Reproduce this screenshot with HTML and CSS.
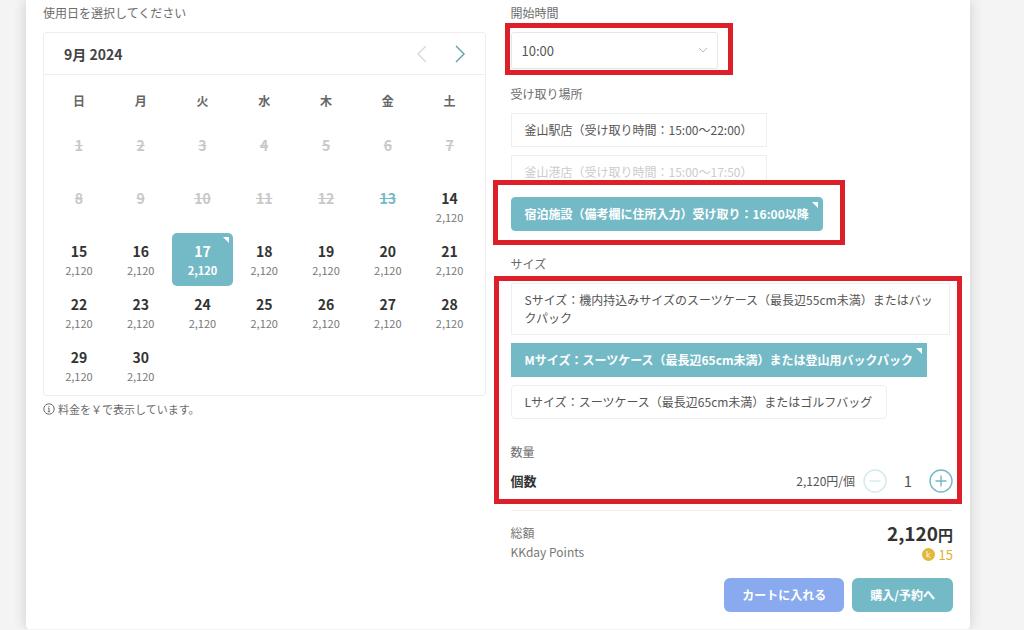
FILE: index.html
```
<!DOCTYPE html>
<html lang="ja">
<head>
<meta charset="utf-8">
<meta name="viewport" content="width=device-width, initial-scale=1">
<title>KKday</title>
<link rel="stylesheet" href="styles.css">
</head>
<body>
<main class="card">
  <section class="column">
    <h2 class="label">使用日を選択してください</h2>
    <div class="calendar">
      <header class="calendar-head">
        <h3 class="month">9月 2024</h3>
        <button class="nav nav-off" type="button" disabled aria-label="前の月"><svg width="10" height="18" viewBox="0 0 10 18"><path d="M9 1L1 9l8 8"/></svg></button>
        <button class="nav" type="button" aria-label="次の月"><svg width="10" height="18" viewBox="0 0 10 18"><path d="M1 1l8 8-8 8"/></svg></button>
      </header>
      <table class="days">
        <thead>
          <tr><th>日</th><th>月</th><th>火</th><th>水</th><th>木</th><th>金</th><th>土</th></tr>
        </thead>
        <tbody>
          <tr>
            <td><button class="day" disabled><s>1</s></button></td>
            <td><button class="day" disabled><s>2</s></button></td>
            <td><button class="day" disabled><s>3</s></button></td>
            <td><button class="day" disabled><s>4</s></button></td>
            <td><button class="day" disabled><s>5</s></button></td>
            <td><button class="day" disabled><s>6</s></button></td>
            <td><button class="day" disabled><s>7</s></button></td>
          </tr>
          <tr>
            <td><button class="day" disabled><s>8</s></button></td>
            <td><button class="day" disabled><s>9</s></button></td>
            <td><button class="day" disabled><s>10</s></button></td>
            <td><button class="day" disabled><s>11</s></button></td>
            <td><button class="day" disabled><s>12</s></button></td>
            <td><button class="day today" disabled><s>13</s></button></td>
            <td><button class="day">14<span class="price">2,120</span></button></td>
          </tr>
          <tr>
            <td><button class="day">15<span class="price">2,120</span></button></td>
            <td><button class="day">16<span class="price">2,120</span></button></td>
            <td><button class="day picked" aria-pressed="true">17<span class="price">2,120</span></button></td>
            <td><button class="day">18<span class="price">2,120</span></button></td>
            <td><button class="day">19<span class="price">2,120</span></button></td>
            <td><button class="day">20<span class="price">2,120</span></button></td>
            <td><button class="day">21<span class="price">2,120</span></button></td>
          </tr>
          <tr>
            <td><button class="day">22<span class="price">2,120</span></button></td>
            <td><button class="day">23<span class="price">2,120</span></button></td>
            <td><button class="day">24<span class="price">2,120</span></button></td>
            <td><button class="day">25<span class="price">2,120</span></button></td>
            <td><button class="day">26<span class="price">2,120</span></button></td>
            <td><button class="day">27<span class="price">2,120</span></button></td>
            <td><button class="day">28<span class="price">2,120</span></button></td>
          </tr>
          <tr>
            <td><button class="day">29<span class="price">2,120</span></button></td>
            <td><button class="day">30<span class="price">2,120</span></button></td>
            <td></td><td></td><td></td><td></td><td></td>
          </tr>
        </tbody>
      </table>
    </div>
    <p class="note"><svg width="12" height="12" viewBox="0 0 12 12"><circle cx="6" cy="6" r="5.2"/><path d="M6 3v1.2M5 5.2h1v3.4M4.8 8.7h2.4"/></svg>料金を￥で表示しています。</p>
  </section>

  <section class="column">
    <label class="label" for="start">開始時間</label>
    <div class="select-wrap marked mark-time">
      <select class="select" id="start"><option>10:00</option></select>
      <svg class="chevron" width="10" height="7" viewBox="0 0 10 7"><path d="M1 1l4 4 4-4"/></svg>
    </div>

    <h2 class="label">受け取り場所</h2>
    <div class="options">
      <button class="option" type="button">釜山駅店（受け取り時間：15:00〜22:00）</button>
      <button class="option" type="button" disabled>釜山港店（受け取り時間：15:00〜17:50）</button>
      <div class="marked mark-place">
        <button class="option picked rounded" type="button" aria-pressed="true">宿泊施設（備考欄に住所入力）受け取り：16:00以降</button>
      </div>
    </div>

    <h2 class="label">サイズ</h2>
    <div class="marked mark-size">
      <div class="options">
        <button class="option" type="button">Sサイズ：機内持込みサイズのスーツケース（最長辺55cm未満）またはバックパック</button>
        <button class="option picked" type="button" aria-pressed="true">Mサイズ：スーツケース（最長辺65cm未満）または登山用バックパック</button>
        <button class="option rounded" type="button">Lサイズ：スーツケース（最長辺65cm未満）またはゴルフバッグ</button>
      </div>
      <h2 class="label tight">数量</h2>
      <div class="quantity">
        <strong class="quantity-name">個数</strong>
        <span class="unit">2,120円/個</span>
        <button class="step" type="button" disabled aria-label="減らす"><svg width="24" height="24" viewBox="0 0 24 24"><circle cx="12" cy="12" r="11"/><path d="M6.5 12h11"/></svg></button>
        <output class="count">1</output>
        <button class="step" type="button" aria-label="増やす"><svg width="24" height="24" viewBox="0 0 24 24"><circle cx="12" cy="12" r="11"/><path d="M6.5 12h11M12 6.5v11"/></svg></button>
      </div>
    </div>

    <dl class="totals">
      <dt>総額</dt>
      <dd class="total">2,120<span class="yen">円</span></dd>
      <dt>KKday Points</dt>
      <dd class="points"><svg width="13" height="13" viewBox="0 0 13 13"><circle class="coin" cx="6.5" cy="6.5" r="6.5"/><path d="M5 3v6.5M8.4 5.2L5.2 7.5l3.3 2.2"/></svg>15</dd>
    </dl>
    <div class="actions">
      <button class="action cart" type="button">カートに入れる</button>
      <button class="action buy" type="button">購入/予約へ</button>
    </div>
  </section>
</main>
</body>
</html>
```
FILE: styles.css
```
* {
  box-sizing: border-box;
}

body {
  margin: 0;
  background: #f4f4f4;
  color: #555;
  font: 12px/18px "Noto Sans CJK JP", sans-serif;
}

button,
select {
  font: inherit;
  color: inherit;
  border: 0;
  background: none;
  padding: 0;
}

svg {
  display: block;
  flex: none;
  fill: none;
  stroke: currentColor;
}

.card {
  display: grid;
  grid-template-columns: minmax(0, 1fr) minmax(0, 1fr);
  column-gap: 25px;
  margin: 0 54px 0 26px;
  padding: 4px 17px 17px;
  background: #fff;
  border-radius: 0 0 4px 4px;
  box-shadow: 0 0 14px rgba(0, 0, 0, 0.16);
}

.label {
  display: block;
  margin: 0 0 10px;
  font-size: 12px;
  font-weight: 400;
  color: #6c6c6c;
}

.tight {
  margin-bottom: 8px;
}

/* Calendar */

.calendar {
  border: 1px solid #eee;
  border-radius: 3px;
}

.calendar-head {
  display: flex;
  align-items: center;
  gap: 28px;
  height: 42px;
  padding: 0 20px;
  border-bottom: 1px solid #eee;
}

.month {
  flex: 1;
  margin: 0;
  font-size: 14px;
  font-weight: 700;
  color: #444;
}

.nav {
  color: #5f9eab;
}

.nav svg {
  stroke-width: 1.4;
}

.nav-off {
  color: #d8d8d8;
}

.days {
  width: 100%;
  padding: 0 4px 3px;
  border-spacing: 0;
  table-layout: fixed;
}

.days th {
  height: 52px;
  padding: 0;
  font-weight: 700;
  color: #666;
}

.days td {
  height: 53px;
  padding: 0;
}

.day {
  display: flex;
  flex-direction: column;
  align-items: center;
  gap: 1px;
  width: 100%;
  height: 53px;
  padding-top: 9px;
  border-radius: 5px;
  font-size: 14px;
  font-weight: 700;
  color: #333;
}

.day:disabled {
  color: #c8c8c8;
}

.day.today {
  color: #74bac6;
}

.day.picked {
  color: #fff;
}

.price {
  font-size: 11px;
  font-weight: 400;
  color: #777;
}

.picked {
  position: relative;
  background: #74bac6;
  color: #fff;
}

.picked .price {
  color: #fff;
  font-weight: 700;
}

.picked::after {
  content: "";
  position: absolute;
  top: 4px;
  right: 4px;
  border: 3px solid transparent;
  border-top-color: #fff;
  border-right-color: #fff;
}

.note {
  display: flex;
  align-items: center;
  gap: 3px;
  margin: 4px 0 0;
  font-size: 11px;
  color: #6c6c6c;
}

/* Highlight frames */

.marked {
  position: relative;
  isolation: isolate;
}

.marked::before {
  content: "";
  position: absolute;
  z-index: -1;
  border: 5px solid #dd1f29;
}

.mark-time::before {
  inset: -9px -15px -6px -6px;
}

.mark-place::before {
  inset: -17px -22px -14px -18px;
  background: #fff;
}

.mark-size::before {
  inset: -7px -9px -11px -17px;
}

/* Booking options */

.select-wrap {
  width: 47%;
  margin-bottom: 16px;
}

.select {
  display: block;
  appearance: none;
  width: 100%;
  height: 37px;
  padding: 0 10px;
  border: 1px solid #e6e6e6;
  border-radius: 3px;
  font-size: 13px;
}

.chevron {
  position: absolute;
  top: 15px;
  right: 10px;
  color: #bbb;
  pointer-events: none;
}

.options {
  display: flex;
  flex-direction: column;
  align-items: flex-start;
  gap: 8px;
  margin-bottom: 24px;
}

.option {
  display: block;
  margin-right: 3px;
  padding: 7px 14px 7px 13px;
  border: 1px solid #eee;
  text-align: left;
}

.option:disabled {
  color: #ccc;
}

.option.picked {
  padding-right: 13px;
  border-color: #74bac6;
  font-weight: 700;
}

.mark-place .option {
  margin-right: 0;
}

.rounded {
  border-radius: 4px;
}

.quantity {
  display: flex;
  align-items: center;
}

.quantity-name {
  flex: 1;
  font-size: 13px;
  color: #333;
}

.unit {
  margin-right: 8px;
}

.step {
  color: #74bac6;
}

.step svg {
  stroke-width: 1.4;
}

.step:disabled {
  color: #d3eaee;
}

.count {
  width: 42px;
  font-size: 15px;
  text-align: center;
}

.totals {
  display: grid;
  grid-template: 19px 23px / 1fr auto;
  margin: 17px 0 12px;
  padding-top: 13px;
  border-top: 1px solid #f0f0f0;
  color: #777;
}

.totals dd {
  display: flex;
  align-items: center;
  justify-content: flex-end;
  margin: 0;
}

.totals .total {
  align-items: baseline;
  font-size: 19px;
  font-weight: 700;
  color: #333;
}

.yen {
  font-size: 15px;
}

.points {
  gap: 4px;
  font-size: 13px;
  color: #dfb032;
}

.points path {
  stroke: #fff6d8;
}

.coin {
  fill: #e0b83c;
  stroke: none;
}

.actions {
  display: flex;
  justify-content: flex-end;
  gap: 8px;
}

.action {
  height: 34px;
  padding: 0 18px;
  border-radius: 6px;
  font-weight: 700;
  color: #fff;
}

.cart {
  background: #89aaee;
}

.buy {
  background: #74bac6;
}
```
